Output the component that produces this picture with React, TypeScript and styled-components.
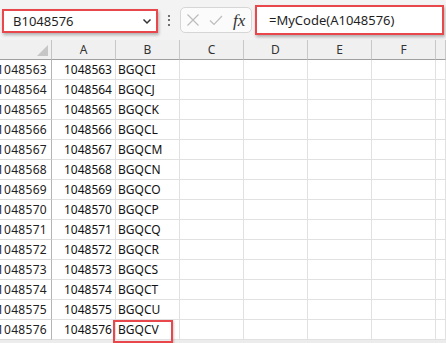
import styled, { createGlobalStyle } from "styled-components"

const GlobalStyle = createGlobalStyle`
  html, body {
    margin: 0;
    padding: 0;
    background: #ececec;
    font-family: "Noto Sans", "Liberation Sans", sans-serif;
  }
  * {
    box-sizing: border-box;
  }
`

const Page = styled.div`
  width: 446px;
  height: 343px;
  overflow: hidden;
  background: #ececec;
`

const Toolbar = styled.div`
  height: 40px;
  background: #f3f3f3;
  display: flex;
  align-items: center;
  padding-left: 2px;
`

const NameBox = styled.div`
  width: 156px;
  height: 24px;
  margin-top: 2px;
  border: 2.5px solid #e8474c;
  background: #fff;
  box-shadow: 1px 2px 3px rgba(0, 0, 0, 0.28);
  display: flex;
  align-items: center;
  justify-content: space-between;
  padding: 0 4px 0 9px;
  font-size: 13px;
  color: #1f1f1f;
`

const Dots = styled.div`
  width: 22px;
  display: flex;
  flex-direction: column;
  align-items: center;
  gap: 2.5px;
  span {
    width: 2px;
    height: 2px;
    background: #444;
    border-radius: 1px;
  }
`

const IconBox = styled.div`
  width: 72px;
  height: 26px;
  border: 1px solid #d6d6d6;
  border-radius: 5px;
  background: #fbfbfb;
  display: flex;
  align-items: center;
  padding-left: 5px;
  gap: 9px;
`

const Fx = styled.span`
  font-family: "Liberation Serif", "DejaVu Serif", serif;
  font-style: italic;
  font-size: 17px;
  color: #333;
  margin-left: 1px;
  line-height: 1;
`

const FormulaBox = styled.div`
  width: 189px;
  height: 30px;
  margin-left: 3px;
  border: 2.5px solid #e8474c;
  background: #fff;
  box-shadow: 1px 2px 3px rgba(0, 0, 0, 0.28);
  display: flex;
  align-items: center;
  padding-left: 12px;
  font-size: 13px;
  color: #1f1f1f;
`

const Sheet = styled.div`
  display: grid;
  grid-template-columns: 52px repeat(6, 64px) 1fr;
  grid-auto-rows: 20px;
  background: #fff;
  font-size: 12px;
  color: #111;
`

const Corner = styled.div`
  background: #f0f0f0;
  border-right: 1px solid #c4c4c4;
  border-bottom: 1px solid #a0a0a0;
  display: flex;
  align-items: flex-end;
  justify-content: flex-end;
  padding: 0 3px 3px 0;
`

const ColHead = styled.div`
  background: #f0f0f0;
  border-right: 1px solid #c8c8c8;
  border-bottom: 1px solid #a0a0a0;
  display: flex;
  align-items: center;
  justify-content: center;
  color: #333;
`

const RowHead = styled.div`
  background: #fff;
  border-right: 1px solid #b4b4b4;
  border-bottom: 1px solid #d8d8d8;
  display: flex;
  align-items: center;
  justify-content: flex-end;
  padding-right: 4px;
  overflow: hidden;
  white-space: nowrap;
  letter-spacing: 0.3px;
  color: #222;
`

const Cell = styled.div<{ $align?: "left" | "right" }>`
  position: relative;
  border-right: 1px solid #e1e1e1;
  border-bottom: 1px solid #e1e1e1;
  display: flex;
  align-items: center;
  justify-content: ${(p) => (p.$align === "right" ? "flex-end" : "flex-start")};
  padding: 0 3px 0 2px;
  white-space: nowrap;
`

const Highlight = styled.div`
  position: absolute;
  left: -3px;
  top: 0;
  width: 60px;
  height: 23px;
  border: 2px solid #e8474c;
  box-shadow: 1px 1px 2px rgba(0, 0, 0, 0.2);
  pointer-events: none;
`

const cols = ["A", "B", "C", "D", "E", "F", ""]

const toCode = (n: number) => {
  let s = ""
  while (n > 0) {
    const r = (n - 1) % 26
    s = String.fromCharCode(65 + r) + s
    n = Math.floor((n - 1) / 26)
  }
  return s
}

const rows = Array.from({ length: 14 }, (_, i) => 1048563 + i)

const App = () => {
  return (
    <Page>
      <GlobalStyle />
      <Toolbar>
        <NameBox>
          <span>B1048576</span>
          <svg width="10" height="7" viewBox="0 0 10 7">
            <path d="M1.5 1.5 L5 5 L8.5 1.5" fill="none" stroke="#333" strokeWidth="1.5" />
          </svg>
        </NameBox>
        <Dots>
          <span />
          <span />
          <span />
        </Dots>
        <IconBox>
          <svg width="14" height="14" viewBox="0 0 14 14">
            <path d="M1.5 1.5 L12.5 12.5 M12.5 1.5 L1.5 12.5" stroke="#bdbdbd" strokeWidth="1.2" />
          </svg>
          <svg width="14" height="14" viewBox="0 0 14 14">
            <path d="M1 7.5 L5 11.5 L13 3" fill="none" stroke="#bdbdbd" strokeWidth="1.2" />
          </svg>
          <Fx>fx</Fx>
        </IconBox>
        <FormulaBox>=MyCode(A1048576)</FormulaBox>
      </Toolbar>
      <Sheet>
        <Corner>
          <svg width="11" height="11" viewBox="0 0 11 11">
            <path d="M11 0 L11 11 L0 11 Z" fill="#c6c6c6" />
          </svg>
        </Corner>
        {cols.map((c, i) => (
          <ColHead key={i}>{c}</ColHead>
        ))}
        {rows.map((r) => (
          <Row key={r} n={r} last={r === 1048576} />
        ))}
      </Sheet>
    </Page>
  )
}

const Row = ({ n, last }: { n: number; last: boolean }) => (
  <>
    <RowHead>{n}</RowHead>
    <Cell $align="right">{n}</Cell>
    <Cell>
      {toCode(n)}
      {last && <Highlight />}
    </Cell>
    <Cell />
    <Cell />
    <Cell />
    <Cell />
    <Cell />
  </>
)

export default App
